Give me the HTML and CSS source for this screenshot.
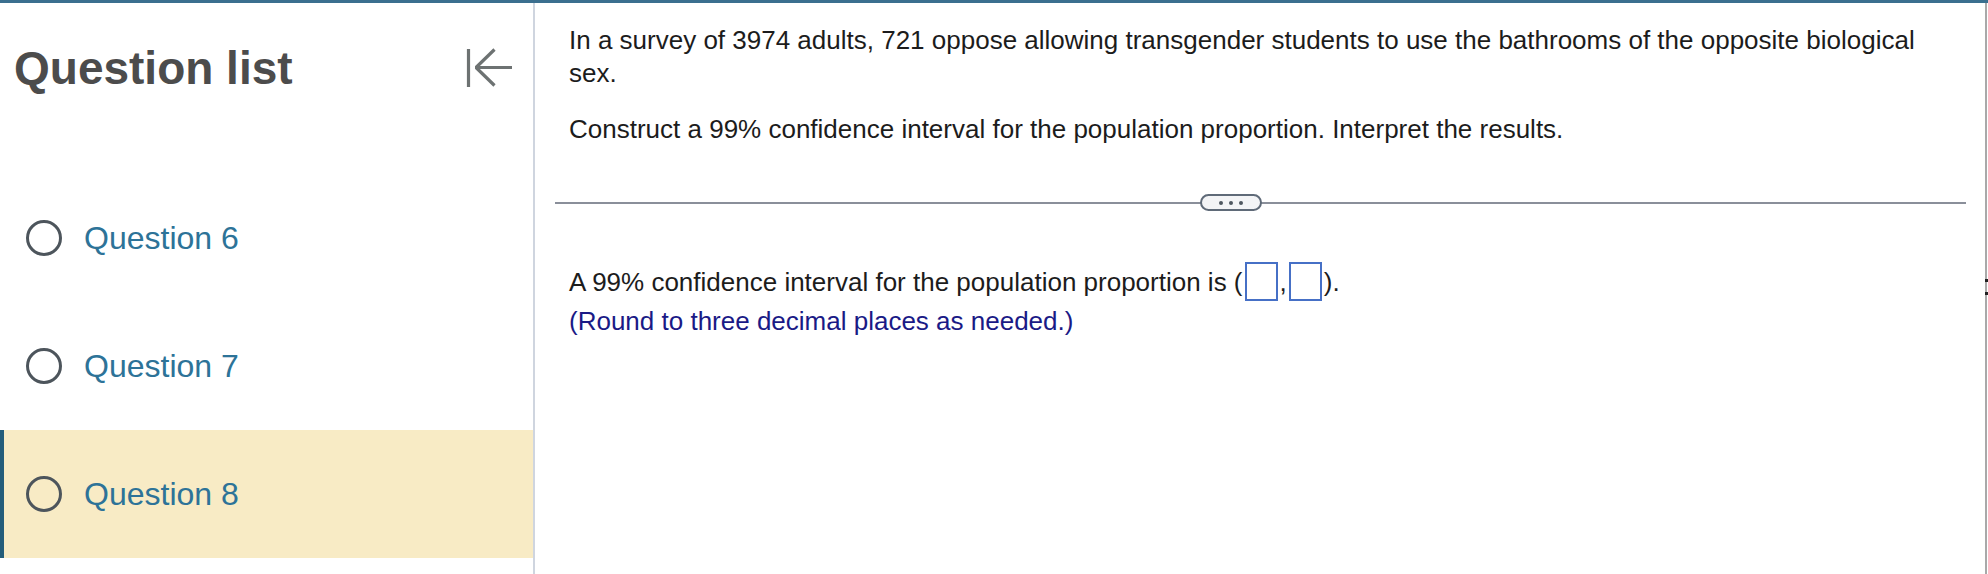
FILE: index.html
```html
<!DOCTYPE html>
<html lang="en">
<head>
<meta charset="utf-8">
<title>Question list</title>
<link rel="stylesheet" href="styles.css">
</head>
<body>
<div class="app">
  <aside class="sidebar">
    <div class="sidebar-head">
      <h1 class="sidebar-title">Question list</h1>
      <button class="collapse" aria-label="Collapse question list">
        <svg width="50" height="42" viewBox="0 0 50 42">
          <path d="M3.5 2v38" stroke="#6d7272" stroke-width="3.2" fill="none"/>
          <path d="M10 20.5h37M11 20.5L29.5 2.5M11 20.5L29.5 38.5" stroke="#6d7272" stroke-width="3.2" fill="none"/>
        </svg>
      </button>
    </div>
    <ul class="qlist">
      <li class="qitem"><span class="radio"></span><span class="qlabel">Question 6</span></li>
      <li class="qitem"><span class="radio"></span><span class="qlabel">Question 7</span></li>
      <li class="qitem active"><span class="radio"></span><span class="qlabel">Question 8</span></li>
    </ul>
  </aside>
  <main class="content">
    <div class="stem">
      <p class="para">In a survey of 3974 adults, 721 oppose allowing transgender students to use the bathrooms of the opposite biological sex.</p>
      <p class="para second">Construct a 99% confidence interval for the population proportion. Interpret the results.</p>
    </div>
    <div class="divider">
      <span class="more"><i></i><i></i><i></i></span>
    </div>
    <div class="answer">
      <p class="answer-line">A 99% confidence interval for the population proportion is (<span class="box"></span>,<span class="box"></span>).</p>
      <p class="hint">(Round to three decimal places as needed.)</p>
    </div>
    <span class="edge-mark"></span>
  </main>
</div>
</body>
</html>
```
FILE: styles.css
```css
html, body {
  margin: 0;
  padding: 0;
  background: #ffffff;
}
body {
  width: 1988px;
  height: 574px;
  overflow: hidden;
  font-family: "Liberation Sans", Arial, Helvetica, sans-serif;
}
.app {
  display: flex;
  width: 1988px;
  height: 574px;
  box-sizing: border-box;
  border-top: 3px solid #3b6f8f;
}
.sidebar {
  width: 533px;
  flex: none;
  border-right: 2px solid #cfd5df;
  display: flex;
  flex-direction: column;
}
.sidebar-head {
  height: 171px;
  box-sizing: border-box;
  padding: 42px 18px 0 14px;
  display: flex;
  align-items: flex-start;
}
.sidebar-title {
  margin: 0;
  font-size: 46px;
  line-height: 46px;
  font-weight: bold;
  color: #4c4c4c;
}
.collapse {
  margin-left: auto;
  margin-top: 2px;
  padding: 0;
  border: 0;
  background: none;
  width: 50px;
  height: 42px;
  display: block;
}
.collapse svg {
  display: block;
}
.qlist {
  list-style: none;
  margin: 0;
  padding: 0;
}
.qitem {
  height: 128px;
  display: flex;
  align-items: center;
  padding-left: 26px;
}
.qitem.active {
  background: #f8ebc5;
  box-shadow: inset 4px 0 0 #245d7a;
}
.radio {
  width: 36px;
  height: 36px;
  box-sizing: border-box;
  border: 3px solid #4d555c;
  border-radius: 50%;
  flex: none;
}
.qlabel {
  margin-left: 22px;
  font-size: 32px;
  color: #2d7398;
}
.content {
  position: relative;
  flex: 1;
  border-right: 2px solid #a9a9a9;
  margin-right: 1px;
  padding: 0 19px 0 20px;
  color: #1c1c1c;
  font-size: 26px;
  line-height: 36px;
}
.stem {
  padding: 21px 0 0 14px;
  max-width: 1370px;
  line-height: 33px;
}
.para {
  margin: 0;
}
.para.second {
  margin-top: 23px;
}
.divider {
  position: relative;
  margin-top: 56px;
  height: 2px;
  background: #8a8f9a;
}
.more {
  position: absolute;
  left: 645px;
  top: -8px;
  width: 62px;
  height: 17px;
  box-sizing: border-box;
  border: 2px solid #5f6a78;
  border-radius: 9px;
  background: #f3f4f6;
  display: flex;
  justify-content: center;
  align-items: center;
  gap: 6px;
}
.more i {
  width: 4px;
  height: 4px;
  border-radius: 50%;
  background: #4f5760;
}
.answer {
  padding: 58px 0 0 14px;
}
.answer-line {
  margin: 0;
  line-height: 40px;
}
.box {
  display: inline-block;
  width: 33px;
  height: 39px;
  box-sizing: border-box;
  border: 2px solid #4670c6;
  margin: 0 2px;
  vertical-align: top;
}
.hint {
  margin: 1px 0 0;
  color: #1a1a86;
}
.edge-mark {
  position: absolute;
  right: -3px;
  top: 276px;
  width: 3px;
  height: 16px;
  border-top: 3px solid #222;
  border-bottom: 3px solid #222;
  box-sizing: border-box;
}
```
